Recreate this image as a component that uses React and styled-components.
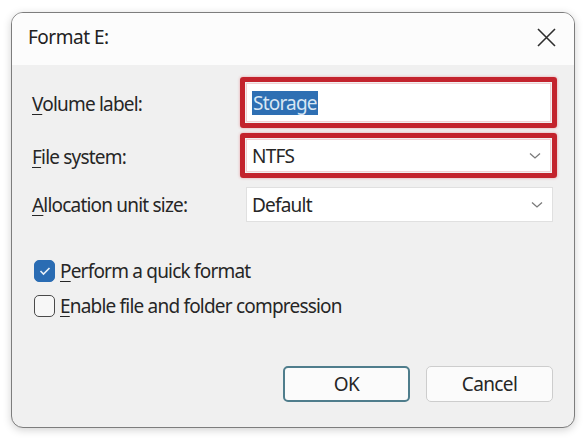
import React from "react";
import styled, { createGlobalStyle } from "styled-components";

const GlobalStyle = createGlobalStyle`
  html, body {
    margin: 0;
    padding: 0;
    background: #ffffff;
  }
  body {
    font-family: "Noto Sans", "Open Sans", sans-serif;
    color: #1f1f1f;
  }
`;

const Page = styled.div`
  width: 586px;
  height: 440px;
  padding: 12px 11px 0 11px;
  box-sizing: border-box;
`;

const Dialog = styled.div`
  width: 564px;
  height: 416px;
  box-sizing: border-box;
  border: 1px solid #7d7d7d;
  border-radius: 12px;
  background: #f0f0f0;
  overflow: hidden;
  display: flex;
  flex-direction: column;
  box-shadow: 0 2px 8px rgba(0, 0, 0, 0.18);
`;

const TitleBar = styled.div`
  height: 52px;
  background: #fcfcfc;
  display: flex;
  align-items: center;
  justify-content: space-between;
  padding: 0 17px 0 16px;
  flex-shrink: 0;
`;

const Title = styled.div`
  font-size: 19px;
  color: #222;
  letter-spacing: -0.5px;
  margin-top: -4px;
`;

const CloseButton = styled.div`
  width: 22px;
  height: 22px;
  display: flex;
  align-items: center;
  justify-content: center;
  margin-top: -4px;
`;

const Body = styled.div`
  flex: 1;
  display: flex;
  flex-direction: column;
  padding: 12px 17px 25px 20px;
`;

const FieldGrid = styled.div`
  display: grid;
  grid-template-columns: 208px 317px;
  row-gap: ${p => p.$gap || 5}px;
  align-items: center;
`;

const Label = styled.div`
  font-size: 19px;
  letter-spacing: -0.8px;
  color: #262626;
  margin-top: ${p => p.$offset || 0}px;
`;

const Key = styled.span`
  text-decoration: underline;
  text-underline-offset: 3px;
  text-decoration-thickness: 1px;
`;

const Frame = styled.div`
  height: ${p => p.$h}px;
  box-sizing: border-box;
  border: ${p => (p.$marked ? "5px solid #c3232d" : "0")};
  border-radius: 3px;
  padding: ${p => (p.$marked ? "1px" : "0 4px 0 6px")};
  box-shadow: ${p => (p.$marked ? "0 0 3px rgba(220, 60, 70, 0.45)" : "none")};
  display: flex;
  margin-top: ${p => p.$mt || 0}px;
`;

const Input = styled.div`
  flex: 1;
  background: #ffffff;
  border: 1px solid ${p => (p.$marked ? "#f2d0d3" : "#e0e0e0")};
  display: flex;
  align-items: center;
  justify-content: space-between;
  padding: 0 9px 0 5px;
  font-size: 19px;
  letter-spacing: -0.8px;
  color: #262626;
`;

const Selected = styled.span`
  background: #2e6fb3;
  color: #d8e6f3;
  padding: 0 1px;
  line-height: 24px;
`;

const Checks = styled.div`
  display: flex;
  flex-direction: column;
  gap: 9px;
  margin-top: 36px;
  padding-left: 2px;
`;

const CheckRow = styled.div`
  display: flex;
  align-items: center;
  gap: 5px;
  font-size: 19px;
  letter-spacing: -0.8px;
  color: #262626;
`;

const Box = styled.div`
  width: 21px;
  height: 22px;
  box-sizing: border-box;
  border-radius: 5px;
  border: 1.5px solid ${p => (p.$checked ? "#2a6cb3" : "#4a4a4a")};
  background: ${p => (p.$checked ? "#2a6cb3" : "#f7f7f7")};
  display: flex;
  align-items: center;
  justify-content: center;
`;

const Buttons = styled.div`
  margin-top: auto;
  display: flex;
  justify-content: flex-end;
  gap: 16px;
  padding-right: 4px;
`;

const Button = styled.div`
  width: 127px;
  height: 36px;
  box-sizing: border-box;
  border-radius: 5px;
  border: ${p => (p.$primary ? "2px solid #4f7d8c" : "1px solid #cdcdcd")};
  background: #fbfbfb;
  display: flex;
  align-items: center;
  justify-content: center;
  font-size: 19px;
  letter-spacing: -0.6px;
  color: #262626;
`;

const Chevron = () => (
  <svg width="12" height="8" viewBox="0 0 12 8">
    <path d="M1 1.5 L6 6 L11 1.5" fill="none" stroke="#7a7a7a" strokeWidth="1.3" />
  </svg>
);

const CloseIcon = () => (
  <svg width="19" height="19" viewBox="0 0 19 19">
    <path d="M1 1 L18 18 M18 1 L1 18" stroke="#2e2e2e" strokeWidth="1.6" />
  </svg>
);

const Tick = () => (
  <svg width="12" height="10" viewBox="0 0 12 10">
    <path d="M1.5 5 L4.5 8 L10.5 2" fill="none" stroke="#e8f0f8" strokeWidth="1.6" />
  </svg>
);

export default function App() {
  return (
    <Page>
      <GlobalStyle />
      <Dialog>
        <TitleBar>
          <Title>Format E:</Title>
          <CloseButton>
            <CloseIcon />
          </CloseButton>
        </TitleBar>
        <Body>
          <FieldGrid $gap={5}>
            <Label $offset={2}><Key>V</Key>olume label:</Label>
            <Frame $marked $h={51}>
              <Input $marked>
                <Selected>Storage</Selected>
              </Input>
            </Frame>
            <Label $offset={2}><Key>F</Key>ile system:</Label>
            <Frame $marked $h={45}>
              <Input $marked>
                <span>NTFS</span>
                <Chevron />
              </Input>
            </Frame>
            <Label $offset={4}><Key>A</Key>llocation unit size:</Label>
            <Frame $h={35} $mt={4}>
              <Input>
                <span>Default</span>
                <Chevron />
              </Input>
            </Frame>
          </FieldGrid>
          <Checks>
            <CheckRow>
              <Box $checked><Tick /></Box>
              <span><Key>P</Key>erform a quick format</span>
            </CheckRow>
            <CheckRow>
              <Box />
              <span><Key>E</Key>nable file and folder compression</span>
            </CheckRow>
          </Checks>
          <Buttons>
            <Button $primary>OK</Button>
            <Button>Cancel</Button>
          </Buttons>
        </Body>
      </Dialog>
    </Page>
  );
}
